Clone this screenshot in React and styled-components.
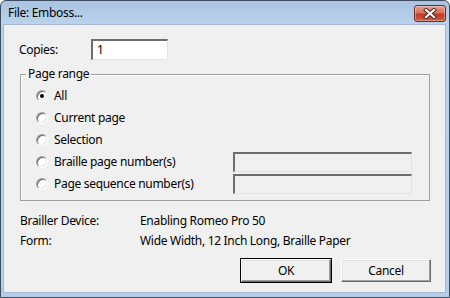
import React from "react";
import styled, { createGlobalStyle } from "styled-components";

const GlobalStyle = createGlobalStyle`
  html, body {
    margin: 0;
    padding: 0;
    background: #ffffff;
  }
  body {
    font-family: "Noto Sans", "Liberation Sans", sans-serif;
    font-size: 12px;
    letter-spacing: -0.3px;
    color: #000;
  }
`;

const Window = styled.div`
  box-sizing: border-box;
  width: 450px;
  height: 298px;
  display: flex;
  flex-direction: column;
  border: 1px solid #3c4d5f;
  border-radius: 6px 6px 0 0;
  background: linear-gradient(#a9c3e1, #bdd3ec 24px, #b6cde7);
  padding: 0 3px 4px 2px;
`;

const TitleBar = styled.div`
  height: 23px;
  flex: none;
  display: flex;
  align-items: center;
  justify-content: space-between;
  padding: 0 0 0 5px;
`;

const Title = styled.span`
  font-size: 12px;
  line-height: 16px;
`;

const CloseButton = styled.div`
  box-sizing: border-box;
  width: 32px;
  height: 17px;
  margin-top: 2px;
  display: flex;
  align-items: center;
  justify-content: center;
  border: 1px solid #6e2a22;
  border-radius: 3px;
  background: linear-gradient(#e6a192 0%, #d7705a 45%, #c23c29 55%, #cf5a43 100%);
  box-shadow: inset 0 0 0 1px rgba(255, 255, 255, 0.35);
`;

const Client = styled.div`
  flex: 1;
  display: flex;
  flex-direction: column;
  background: #f0f0f0;
  border: 1px solid #a3b8d0;
  padding: 14px 14px 10px 15px;
`;

const CopiesRow = styled.div`
  display: flex;
  align-items: center;
  height: 21px;
`;

const Label = styled.span`
  width: ${p => p.$width || "auto"};
  flex: none;
  line-height: 16px;
`;

const Field = styled.div`
  box-sizing: border-box;
  width: ${p => p.$width}px;
  height: ${p => p.$height || 20}px;
  border-style: solid;
  border-width: 2px 1px 1px 2px;
  border-color: #6d6d6d #e3e3e3 #e3e3e3 #6d6d6d;
  background: ${p => (p.$disabled ? "#f0f0f0" : "#ffffff")};
  padding: 0 4px;
  display: flex;
  align-items: center;
  line-height: 16px;
`;

const GroupBox = styled.div`
  position: relative;
  margin: 14px 0 0 1px;
  width: 410px;
  box-sizing: border-box;
  border: 1px solid #a0a0a0;
  box-shadow: inset 1px 1px 0 #ffffff;
  padding: 10px 0 5px 15px;
`;

/* caption sits on top of the group's border line */
const Caption = styled.span`
  position: absolute;
  top: -9px;
  left: 5px;
  padding: 0 2px;
  line-height: 16px;
  background: #f0f0f0;
`;

const OptionRow = styled.div`
  display: grid;
  grid-template-columns: 197px 179px;
  align-items: center;
  height: 22px;
`;

const Option = styled.label`
  display: flex;
  align-items: center;
  gap: 6px;
  line-height: 16px;
`;

const Radio = styled.span`
  box-sizing: border-box;
  width: 12px;
  height: 12px;
  flex: none;
  border-radius: 50%;
  border: 1px solid;
  border-color: #a0a0a0 #ffffff #ffffff #a0a0a0;
  box-shadow: inset 1px 1px 0 #696969, inset -1px -1px 0 #e3e3e3;
  background: #ffffff;
  display: flex;
  align-items: center;
  justify-content: center;
  &::after {
    content: "";
    width: 4px;
    height: 4px;
    border-radius: 50%;
    background: ${p => (p.$checked ? "#000" : "transparent")};
  }
`;

const Info = styled.div`
  display: grid;
  grid-template-columns: 120px auto;
  grid-auto-rows: 20px;
  align-items: center;
  margin-top: 10px;
  margin-left: 1px;
  line-height: 16px;
`;

const ButtonRow = styled.div`
  display: flex;
  justify-content: flex-end;
  gap: 10px;
  margin-top: 8px;
`;

const Button = styled.button`
  box-sizing: border-box;
  width: 90px;
  height: 23px;
  font-family: inherit;
  font-size: 12px;
  letter-spacing: inherit;
  color: #000;
  background: #f0f0f0;
  border-style: solid;
  border-width: 1px;
  border-color: #ffffff #696969 #696969 #ffffff;
  box-shadow: inset -1px -1px 0 #a0a0a0, inset 1px 1px 0 #e3e3e3;
  outline: ${p => (p.$default ? "1px solid #000" : "none")};
  outline-offset: 0;
  padding: 0;
`;

const options = [
  { label: "All", checked: true },
  { label: "Current page" },
  { label: "Selection" },
  { label: "Braille page number(s)", field: true },
  { label: "Page sequence number(s)", field: true }
];

export default function App() {
  return (
    <>
      <GlobalStyle />
      <Window>
        <TitleBar>
          <Title>File: Emboss...</Title>
          <CloseButton>
            <svg width="14" height="11" viewBox="0 0 14 11">
              <path d="M3 2 L11 9 M11 2 L3 9" stroke="#4a1f1a" strokeWidth="4" strokeLinecap="square" />
              <path d="M3 2 L11 9 M11 2 L3 9" stroke="#ffffff" strokeWidth="2.2" strokeLinecap="square" />
            </svg>
          </CloseButton>
        </TitleBar>
        <Client>
          <CopiesRow>
            <Label $width="72px">Copies:</Label>
            <Field $width={77} $height={21}>1</Field>
          </CopiesRow>
          <GroupBox>
            <Caption>Page range</Caption>
            {options.map(o => (
              <OptionRow key={o.label}>
                <Option>
                  <Radio $checked={o.checked} />
                  {o.label}
                </Option>
                {o.field && <Field $width={179} $disabled />}
              </OptionRow>
            ))}
          </GroupBox>
          <Info>
            <span>Brailler Device:</span>
            <span>Enabling Romeo Pro 50</span>
            <span>Form:</span>
            <span>Wide Width, 12 Inch Long, Braille Paper</span>
          </Info>
          <ButtonRow>
            <Button $default>OK</Button>
            <Button>Cancel</Button>
          </ButtonRow>
        </Client>
      </Window>
    </>
  );
}
